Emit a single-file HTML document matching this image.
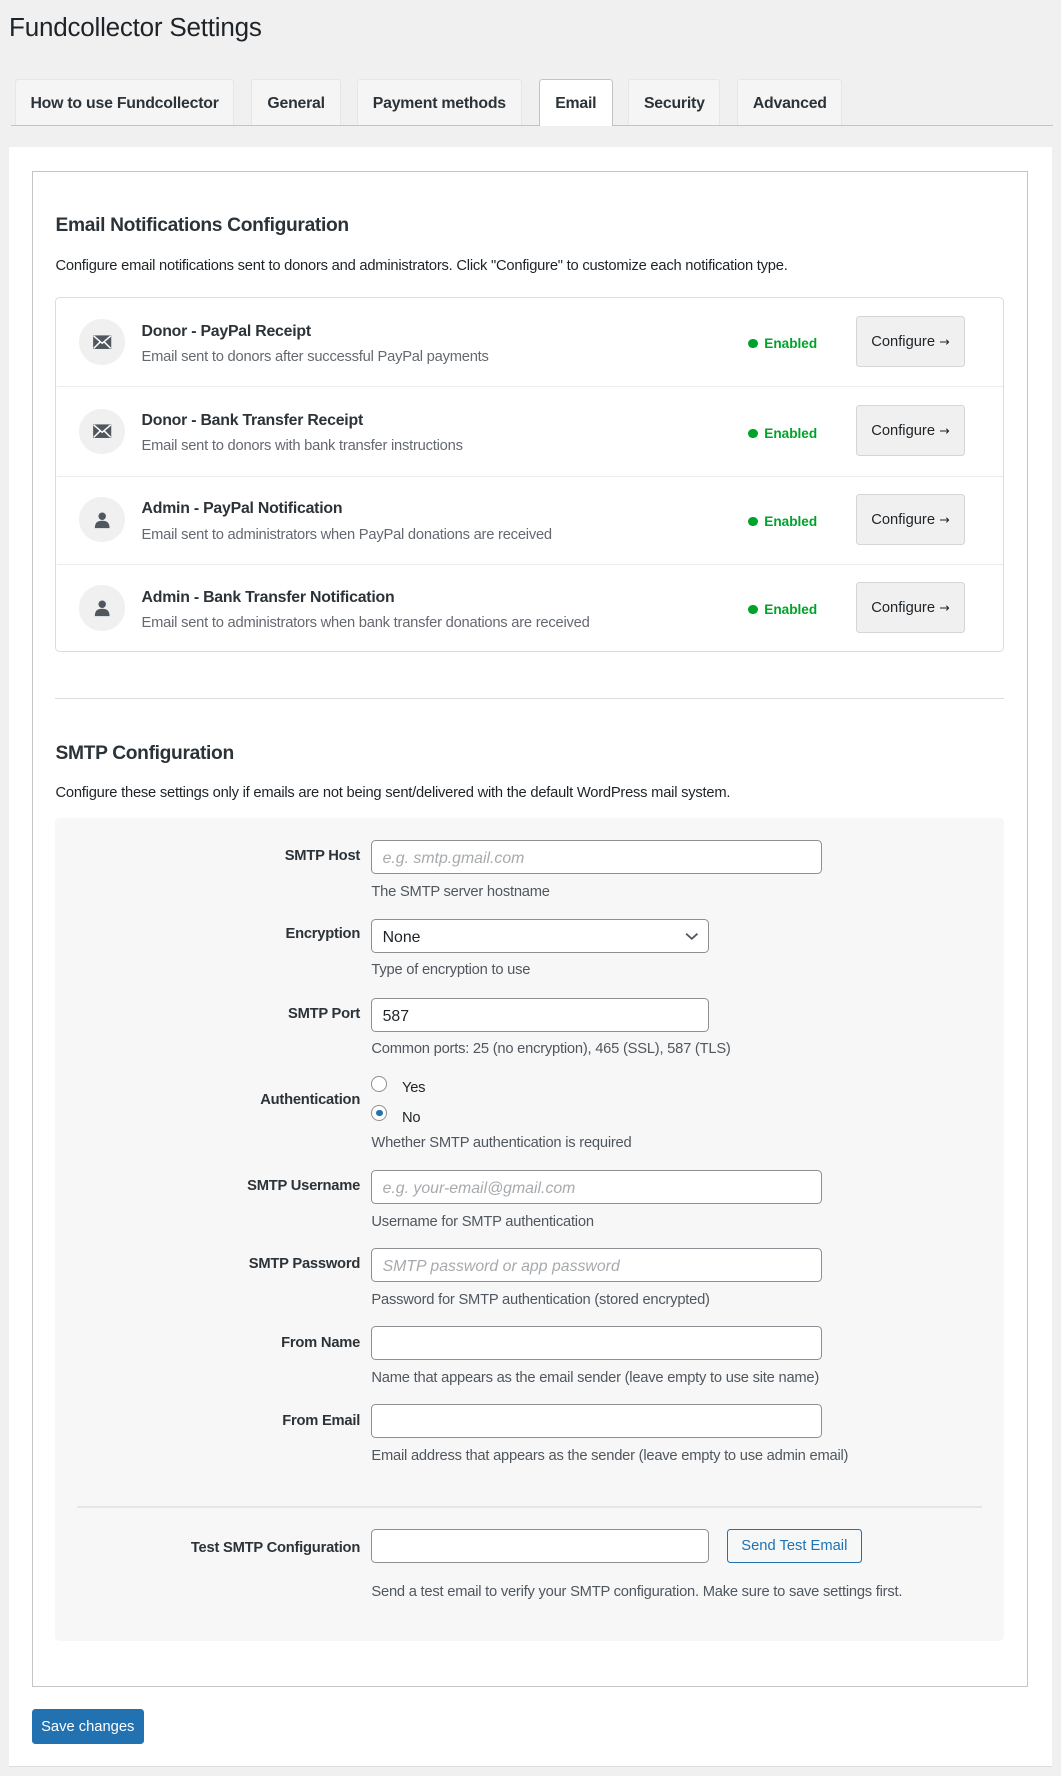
<!DOCTYPE html>
<html><head><meta charset="utf-8"><style>
html,body{margin:0;padding:0;background:#f0f0f1;}
body{width:1061px;height:1775px;overflow:hidden;font-family:"Liberation Sans",sans-serif;color:#1d2327;}
#w{zoom:1.13234;position:relative;width:937px;height:1568px;}
.a{position:absolute;white-space:nowrap;}
.t{font-size:13px;letter-spacing:-0.2px;line-height:16px;margin-top:2px;}
.tab{position:absolute;top:70px;height:40px;background:#f5f5f5;border:1px solid #e6e6e6;border-bottom:none;box-sizing:border-box;font-size:14px;font-weight:bold;letter-spacing:-0.2px;color:#2c3338;text-align:center;line-height:42px;border-radius:3px 3px 0 0;}
.row{position:absolute;left:50px;width:836px;height:78px;}
.ic{position:absolute;left:20px;top:19px;width:40px;height:40px;border-radius:50%;background:#f0f0f1;}
.ic svg{position:absolute;left:11px;top:11px;}
.rt{position:absolute;left:75px;top:22px;font-size:14px;font-weight:bold;letter-spacing:-0.2px;color:#2c3338;}
.rd{position:absolute;left:75px;top:45px;font-size:13px;color:#646970;letter-spacing:-0.2px;}
.en{position:absolute;left:611px;top:34px;font-size:12px;font-weight:bold;color:#00a32a;}
.en:before{content:"";display:inline-block;width:8px;height:8px;border-radius:50%;background:#00a32a;margin-right:6px;vertical-align:0px;}
.cb{position:absolute;left:706px;top:16px;width:96px;height:45px;box-sizing:border-box;background:#f0f0f1;border:1px solid #d5d5d5;border-radius:3px;font-size:13px;line-height:45px;text-align:center;}
.cb span{font-family:"DejaVu Sans",sans-serif;font-size:11px;}
.lb{position:absolute;right:619px;font-size:13px;font-weight:bold;letter-spacing:-0.2px;text-align:right;white-space:nowrap;margin-top:2px;color:#2c3338;}
.in{position:absolute;left:328px;width:398px;height:30px;box-sizing:border-box;background:#fff;border:1px solid #8c8f94;border-radius:4px;font-size:14px;line-height:31px;padding-left:9px;color:#a7aaad;font-style:italic;}
.ds{position:absolute;left:328px;font-size:13px;letter-spacing:-0.2px;color:#50575e;white-space:nowrap;margin-top:2px;}
.rad{position:absolute;left:328px;width:14px;height:14px;border:1px solid #8c8f94;border-radius:50%;box-sizing:border-box;background:#fff;}
</style></head><body><div id="w">
<div class="a" style="left:8px;top:11px;font-size:23px;line-height:28px;letter-spacing:-0.2px;">Fundcollector Settings</div>
<div class="a" style="left:10px;top:110px;width:920px;height:1px;background:#c3c4c7;"></div>
<div class="tab" style="left:13px;width:194px;">How to use Fundcollector</div>
<div class="tab" style="left:222px;width:79px;">General</div>
<div class="tab" style="left:315px;width:146px;">Payment methods</div>
<div class="tab" style="left:476px;width:65px;height:41px;background:#fff;border-color:#c3c4c7;">Email</div>
<div class="tab" style="left:555px;width:81px;">Security</div>
<div class="tab" style="left:651px;width:93px;">Advanced</div>

<div class="a" style="left:8px;top:130px;width:921px;height:1430px;background:#fff;border-bottom:1px solid #dcdcde;"></div>
<div class="a" style="left:28px;top:151px;width:878px;height:1337px;border:1px solid #c3c4c7;background:#fff;"></div>

<div class="a" style="left:49px;top:189px;font-size:17px;font-weight:bold;letter-spacing:-0.3px;line-height:22px;color:#2c3338;">Email Notifications Configuration</div>
<div class="a t" style="left:49px;top:225px;">Configure email notifications sent to donors and administrators. Click "Configure" to customize each notification type.</div>

<div class="a" style="left:49px;top:262px;width:836px;height:312px;border:1px solid #dcdcde;border-radius:4px;"></div>
<div class="row" style="top:263px;border-bottom:1px solid #ececec;">
 <div class="ic"><svg width="18" height="18" viewBox="0 0 18 18"><rect x="1" y="3" width="16" height="12" fill="#50575e"/><path d="M1.5 3.5 L9 10 L16.5 3.5 M1.5 14.5 L7 9 M16.5 14.5 L11 9" stroke="#fff" stroke-width="1.3" fill="none"/></svg></div>
 <div class="rt">Donor - PayPal Receipt</div><div class="rd">Email sent to donors after successful PayPal payments</div>
 <div class="en">Enabled</div><div class="cb">Configure <span>→</span></div></div>
<div class="row" style="top:342px;border-bottom:1px solid #ececec;">
 <div class="ic"><svg width="18" height="18" viewBox="0 0 18 18"><rect x="1" y="3" width="16" height="12" fill="#50575e"/><path d="M1.5 3.5 L9 10 L16.5 3.5 M1.5 14.5 L7 9 M16.5 14.5 L11 9" stroke="#fff" stroke-width="1.3" fill="none"/></svg></div>
 <div class="rt">Donor - Bank Transfer Receipt</div><div class="rd">Email sent to donors with bank transfer instructions</div>
 <div class="en">Enabled</div><div class="cb">Configure <span>→</span></div></div>
<div class="row" style="top:420px;border-bottom:1px solid #ececec;">
 <div class="ic"><svg width="18" height="18" viewBox="0 0 18 18"><circle cx="9" cy="5.5" r="3.3" fill="#50575e"/><path d="M2.5 16 C2.5 11 5 9.5 9 9.5 C13 9.5 15.5 11 15.5 16 Z" fill="#50575e"/></svg></div>
 <div class="rt">Admin - PayPal Notification</div><div class="rd">Email sent to administrators when PayPal donations are received</div>
 <div class="en">Enabled</div><div class="cb">Configure <span>→</span></div></div>
<div class="row" style="top:498px;">
 <div class="ic"><svg width="18" height="18" viewBox="0 0 18 18"><circle cx="9" cy="5.5" r="3.3" fill="#50575e"/><path d="M2.5 16 C2.5 11 5 9.5 9 9.5 C13 9.5 15.5 11 15.5 16 Z" fill="#50575e"/></svg></div>
 <div class="rt">Admin - Bank Transfer Notification</div><div class="rd">Email sent to administrators when bank transfer donations are received</div>
 <div class="en">Enabled</div><div class="cb">Configure <span>→</span></div></div>

<div class="a" style="left:49px;top:616px;width:838px;height:1px;background:#dcdcde;"></div>
<div class="a" style="left:49px;top:655px;font-size:17px;font-weight:bold;letter-spacing:-0.3px;line-height:22px;color:#2c3338;">SMTP Configuration</div>
<div class="a t" style="left:49px;top:690px;">Configure these settings only if emails are not being sent/delivered with the default WordPress mail system.</div>

<div class="a" style="left:49px;top:722px;width:838px;height:727px;background:#f7f7f7;border-radius:4px;"></div>

<div class="lb" style="top:747px;">SMTP Host</div>
<div class="in" style="top:742px;">e.g. smtp.gmail.com</div>
<div class="ds" style="top:779px;">The SMTP server hostname</div>

<div class="lb" style="top:816px;">Encryption</div>
<div class="in" style="top:812px;width:298px;color:#1d2327;font-style:normal;">None<svg style="position:absolute;right:8px;top:10px" width="12" height="8" viewBox="0 0 12 8"><path d="M1 1.5 L6 6 L11 1.5" stroke="#50575e" stroke-width="1.6" fill="none"/></svg></div>
<div class="ds" style="top:848px;">Type of encryption to use</div>

<div class="lb" style="top:886px;">SMTP Port</div>
<div class="in" style="top:881px;width:298px;color:#1d2327;font-style:normal;">587</div>
<div class="ds" style="top:917px;">Common ports: 25 (no encryption), 465 (SSL), 587 (TLS)</div>

<div class="lb" style="top:962px;">Authentication</div>
<div class="rad" style="top:950px;"></div>
<div class="a t" style="left:355px;top:951px;">Yes</div>
<div class="rad" style="top:976px;"><div style="position:absolute;left:3px;top:3px;width:6px;height:6px;border-radius:50%;background:#2271b1;"></div></div>
<div class="a t" style="left:355px;top:977px;">No</div>
<div class="ds" style="top:1000px;">Whether SMTP authentication is required</div>

<div class="lb" style="top:1038px;">SMTP Username</div>
<div class="in" style="top:1033px;">e.g. your-email@gmail.com</div>
<div class="ds" style="top:1070px;">Username for SMTP authentication</div>

<div class="lb" style="top:1107px;">SMTP Password</div>
<div class="in" style="top:1102px;">SMTP password or app password</div>
<div class="ds" style="top:1139px;">Password for SMTP authentication (stored encrypted)</div>

<div class="lb" style="top:1177px;">From Name</div>
<div class="in" style="top:1171px;"></div>
<div class="ds" style="top:1208px;">Name that appears as the email sender (leave empty to use site name)</div>

<div class="lb" style="top:1246px;">From Email</div>
<div class="in" style="top:1240px;"></div>
<div class="ds" style="top:1277px;">Email address that appears as the sender (leave empty to use admin email)</div>

<div class="a" style="left:68px;top:1330px;width:799px;height:2px;background:#e6e6e6;"></div>

<div class="lb" style="top:1358px;">Test SMTP Configuration</div>
<div class="in" style="top:1350px;width:298px;"></div>
<div class="a" style="left:642px;top:1350px;width:119px;height:30px;box-sizing:border-box;border:1px solid #2271b1;border-radius:3px;background:#f6f7f7;color:#2271b1;font-size:13px;line-height:30px;text-align:center;">Send Test Email</div>
<div class="ds" style="top:1397px;">Send a test email to verify your SMTP configuration. Make sure to save settings first.</div>

<div class="a" style="left:28px;top:1509px;width:99px;height:31px;background:#2271b1;border-radius:3px;color:#fff;font-size:13px;line-height:33px;text-align:center;">Save changes</div>
</div></body></html>
